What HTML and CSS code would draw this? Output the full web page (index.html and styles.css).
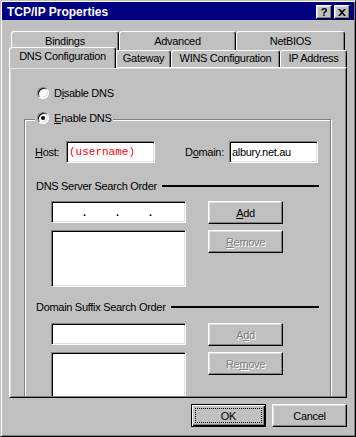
FILE: index.html
```html
<!DOCTYPE html>
<html lang="en">
<head>
    <meta charset="UTF-8">
    <title>TCP/IP Properties</title>
    <link rel="stylesheet" href="styles.css">
</head>
<body>

<div class="window">
    <div class="titlebar">
        <span class="title">TCP/IP Properties</span>
        <div class="title-buttons">
            <span class="tbtn help">?</span>
            <span class="tbtn close">
                <svg width="8" height="7" viewBox="0 0 8 7"><path d="M0 0h2l2 2 2-2h2L5 3.5 8 7H6L4 5 2 7H0l3-3.5z" fill="#000"/></svg>
            </span>
        </div>
    </div>

    <div class="tabs">
        <div class="tabrow back">
            <div class="tab tab-bindings">Bindings</div>
            <div class="tab tab-advanced">Advanced</div>
            <div class="tab tab-netbios">NetBIOS</div>
        </div>
        <div class="tabrow front">
            <div class="tab tab-dns active">DNS Configuration</div>
            <div class="tab tab-gateway">Gateway</div>
            <div class="tab tab-wins">WINS Configuration</div>
            <div class="tab tab-ip">IP Address</div>
        </div>
    </div>

    <div class="panel">
        <div class="panel-inner">
            <div class="radio-row disable">
                <span class="radio"></span>
                <span class="radio-label">D<u>i</u>sable DNS</span>
            </div>

            <div class="group">
                <div class="legend">
                    <span class="radio checked"></span>
                    <span class="radio-label"><u>E</u>nable DNS</span>
                </div>

                <div class="field-row">
                    <span class="field-label"><u>H</u>ost:</span>
                    <div class="textbox"><span class="host-value">(username)</span></div>
                    <span class="field-label domain">D<u>o</u>main:</span>
                    <div class="textbox">albury.net.au</div>
                </div>

                <div class="section-label">
                    <span>DNS Server Search Order</span>
                    <span class="rule"></span>
                </div>
                <div class="list-row server">
                    <div class="col-left">
                        <div class="textbox ipbox">
                            <span class="ip-seg"></span><span class="ip-dot">.</span>
                            <span class="ip-seg"></span><span class="ip-dot">.</span>
                            <span class="ip-seg"></span><span class="ip-dot">.</span>
                            <span class="ip-seg"></span>
                        </div>
                        <div class="listbox"></div>
                    </div>
                    <div class="col-right">
                        <button type="button" class="btn"><span><u>A</u>dd</span></button>
                        <button type="button" class="btn disabled"><span><u>R</u>emove</span></button>
                    </div>
                </div>

                <div class="section-label suffix">
                    <span>Domain Suffix Search Order</span>
                    <span class="rule"></span>
                </div>
                <div class="list-row suffix">
                    <div class="col-left">
                        <div class="textbox wide"></div>
                        <div class="listbox"></div>
                    </div>
                    <div class="col-right">
                        <button type="button" class="btn disabled"><span>A<u>d</u>d</span></button>
                        <button type="button" class="btn disabled"><span>Re<u>m</u>ove</span></button>
                    </div>
                </div>
            </div>
        </div>
    </div>

    <div class="actions">
        <button type="button" class="btn default"><span class="focus">OK</span></button>
        <button type="button" class="btn">Cancel</button>
    </div>
</div>

</body>
</html>
```

FILE: styles.css
```css
* {
    box-sizing: border-box;
}
body {
    margin: 0;
    background: #c0c0c0;
    font-family: "Liberation Sans", Arial, sans-serif;
    font-size: 11px;
    letter-spacing: -0.3px;
    color: #000;
}
u {
    text-decoration-thickness: 1px;
    text-underline-offset: 1px;
}

/* window frame */
.window {
    width: 356px;
    height: 437px;
    padding: 1px;
    background: #c0c0c0;
    border: 1px solid;
    border-color: #c0c0c0 #000 #000 #c0c0c0;
    box-shadow: inset 1px 1px #fff, inset -1px -1px #808080;
}
.titlebar {
    display: flex;
    height: 18px;
    background: #000080;
    color: #fff;
}
.title {
    font-weight: bold;
    font-size: 12px;
    letter-spacing: 0;
    line-height: 18px;
    padding: 1px 0 0 5px;
}
.title-buttons {
    display: flex;
    gap: 2px;
    margin: 3px 4px 0 auto;
}
.tbtn {
    width: 16px;
    height: 14px;
    display: flex;
    align-items: center;
    justify-content: center;
    background: #c0c0c0;
    color: #000;
    font-weight: bold;
    font-size: 11px;
    letter-spacing: 0;
    border: 1px solid;
    border-color: #fff #000 #000 #fff;
    box-shadow: inset -1px -1px #808080, inset 1px 1px #dfdfdf;
}

/* tabs */
.tabs {
    margin-top: 11px;
}
.tabrow {
    display: flex;
}
.tabrow.back {
    margin-left: 9px;
    height: 19px;
}
.tabrow.front {
    margin-left: 7px;
    height: 17px;
    align-items: flex-end;
}
.tab {
    background: #c0c0c0;
    text-align: center;
    line-height: 13px;
    white-space: nowrap;
    border: 1px solid;
    border-bottom: none;
    border-color: #fff #000 #000 #fff;
    border-radius: 3px 3px 0 0;
    box-shadow: inset -1px 0 #808080;
}
.back .tab {
    height: 19px;
    padding-top: 3px;
}
.front .tab {
    height: 17px;
    padding-top: 1px;
}
.front .tab.active {
    height: 21px;
    margin-bottom: -1px;
    padding-top: 2px;
    position: relative;
    z-index: 1;
}
.tab-bindings { width: 108px; }
.tab-advanced { width: 117px; }
.tab-netbios { width: 109px; }
.tab-dns { width: 107px; }
.tab-gateway { width: 55px; }
.tab-wins { width: 109px; }
.tab-ip { width: 67px; }

/* property page */
.panel {
    margin-left: 7px;
    width: 338px;
    height: 331px;
    border: 1px solid;
    border-color: #fff #000 #000 #fff;
}
.panel-inner {
    height: 100%;
    overflow: hidden;
    border: 1px solid;
    border-color: #dfdfdf #808080 #808080 #dfdfdf;
}
.radio-row {
    display: flex;
    align-items: center;
    height: 12px;
}
.radio-row.disable {
    margin: 18px 0 0 26px;
}
.radio {
    flex: none;
    position: relative;
    width: 12px;
    height: 12px;
    border-radius: 50%;
    background: #fff;
    border: 1px solid;
    border-color: #808080 #fff #fff #808080;
    box-shadow: inset 1px 1px #000, inset -1px -1px #dfdfdf;
}
.radio.checked::after {
    content: "";
    position: absolute;
    left: 3px;
    top: 3px;
    width: 4px;
    height: 4px;
    border-radius: 50%;
    background: #000;
}
.radio-label {
    margin-left: 5px;
    line-height: 12px;
    white-space: nowrap;
}

.group {
    margin: 20px 0 0 13px;
    width: 307px;
    height: 300px;
    border: 1px solid #808080;
    box-shadow: inset 1px 1px #fff, 1px 1px #fff;
}
.legend {
    display: flex;
    align-items: center;
    width: max-content;
    height: 12px;
    margin: -8px 0 0 10px;
    padding: 0 1px 0 2px;
    background: #c0c0c0;
}
.field-row {
    display: flex;
    align-items: center;
    height: 22px;
    margin: 17px 0 0 10px;
}
.field-label {
    width: 31px;
    white-space: nowrap;
}
.field-label.domain {
    width: 44px;
    margin-left: 30px;
}
.textbox {
    display: flex;
    align-items: center;
    width: 89px;
    height: 22px;
    padding: 0 2px;
    background: #fff;
    white-space: nowrap;
    border: 1px solid;
    border-color: #808080 #fff #fff #808080;
    box-shadow: inset 1px 1px #000, inset -1px -1px #dfdfdf;
}
.host-value {
    font-family: "Liberation Mono", "Courier New", monospace;
    letter-spacing: 0;
    color: #f00;
}

.section-label {
    display: flex;
    align-items: center;
    height: 13px;
    margin: 16px 11px 0 11px;
    white-space: nowrap;
}
.section-label.suffix {
    margin-top: 13px;
}
.section-label .rule {
    flex: 1;
    height: 2px;
    margin-left: 5px;
    background: #000;
}
.list-row {
    display: flex;
    margin: 9px 0 0 26px;
}
.list-row.suffix {
    margin-top: 10px;
}
.col-left {
    display: flex;
    flex-direction: column;
    gap: 7px;
    width: 135px;
}
.col-left .textbox {
    width: 135px;
}
.ipbox {
    padding: 0 0 0 1px;
}
.ip-seg {
    width: 30px;
}
.ip-dot {
    width: 3px;
    text-align: center;
    font-weight: bold;
    letter-spacing: 0;
}
.listbox {
    height: 57px;
    background: #fff;
    border: 1px solid;
    border-color: #808080 #fff #fff #808080;
    box-shadow: inset 1px 1px #000, inset -1px -1px #dfdfdf;
}
.col-right {
    display: flex;
    flex-direction: column;
    gap: 6px;
    margin-left: 22px;
}

/* buttons */
.btn {
    display: flex;
    align-items: center;
    justify-content: center;
    width: 75px;
    height: 23px;
    padding: 0;
    font: inherit;
    letter-spacing: inherit;
    color: #000;
    background: #c0c0c0;
    border: 1px solid;
    border-color: #fff #000 #000 #fff;
    box-shadow: inset -1px -1px #808080, inset 1px 1px #dfdfdf;
}
.btn.disabled {
    color: #808080;
    text-shadow: 1px 1px #fff;
}
.btn.default {
    border-color: #000;
    box-shadow: inset 1px 1px #fff, inset -1px -1px #000, inset -2px -2px #808080;
}
.btn .focus {
    flex: 1;
    align-self: stretch;
    display: flex;
    align-items: center;
    justify-content: center;
    margin: 3px;
    border: 1px dotted #000;
}
.actions {
    display: flex;
    justify-content: flex-end;
    gap: 6px;
    margin: 6px 7px 0 0;
}
```
